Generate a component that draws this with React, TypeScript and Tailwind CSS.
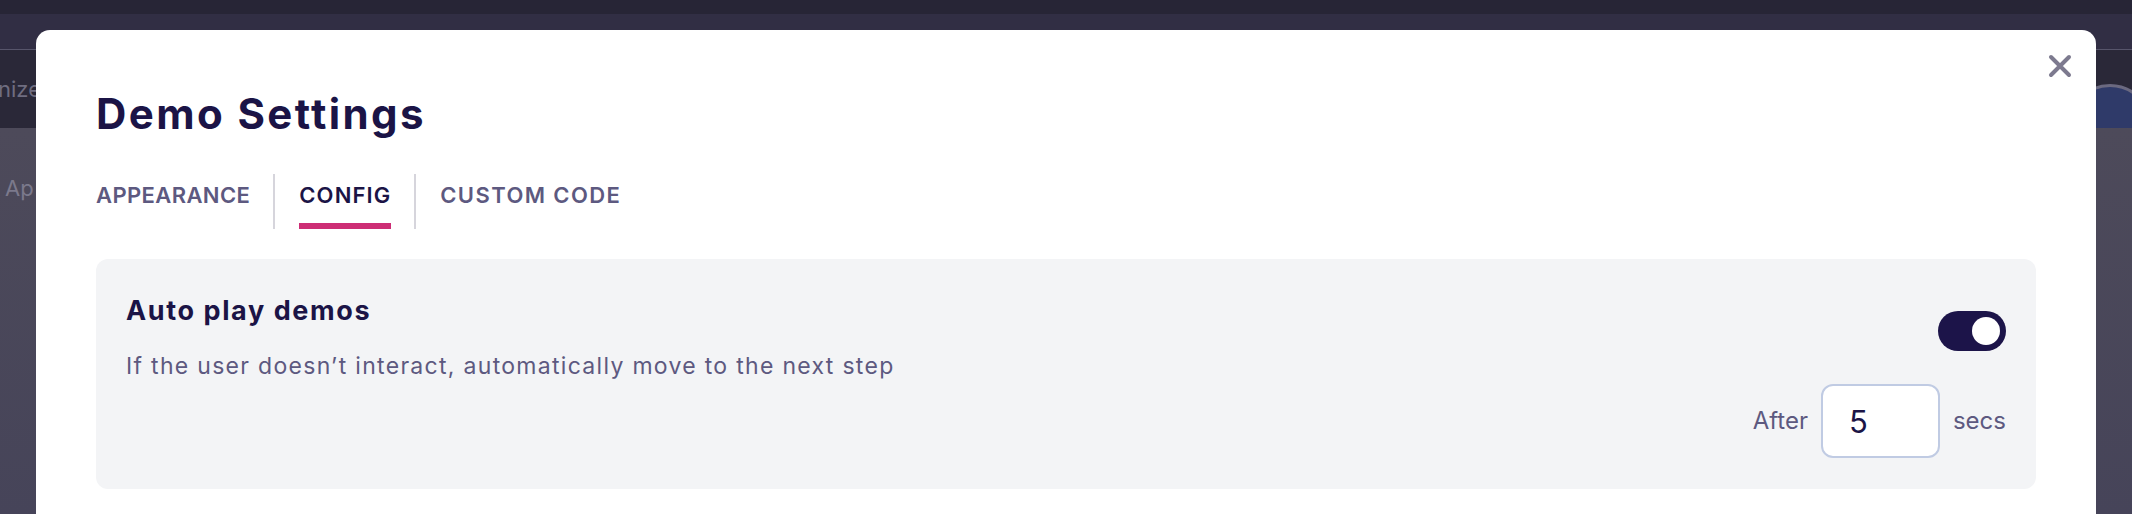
import React, { useState } from 'react'

const tabs = [
  { label: 'APPEARANCE', tracking: 'tracking-[0.4px]' },
  { label: 'CONFIG', tracking: 'tracking-[1.1px]' },
  { label: 'CUSTOM CODE', tracking: 'tracking-[1.4px]' }
]

const Backdrop: React.FC = () => (
  <div className="flex flex-col h-full">
    <div className="h-[14px] shrink-0 bg-[#272536]" />
    <div className="h-[36px] shrink-0 bg-[#312e44] border-b border-[#57556b]" />
    <div className="h-[78px] shrink-0 flex items-center justify-between bg-[#2a2838]">
      <span className="-ml-[2px] text-[22px] text-[#6f6d80]">nize</span>
      <div className="w-[84px] h-[84px] mt-[74px] -mr-[20px] rounded-full border-[3px] border-[#6b6980] bg-[#2f3a69]" />
    </div>
    <div className="flex-1 bg-gradient-to-b from-[#4d4a5a] to-[#464459] pt-[44px]">
      <span className="ml-[5px] text-[22px] text-[#7b798c]">Ap</span>
    </div>
  </div>
)

const Toggle: React.FC<{ on: boolean; onChange: (v: boolean) => void }> = ({ on, onChange }) => (
  <button
    type="button"
    onClick={() => onChange(!on)}
    className="flex items-center w-[68px] h-[40px] rounded-full bg-[#1c1449] px-[6px] justify-end"
  >
    <span className="w-[28px] h-[28px] rounded-full bg-white" />
  </button>
)

export default function App() {
  const [active, setActive] = useState('CONFIG')
  const [autoPlay, setAutoPlay] = useState(true)
  const [secs, setSecs] = useState('5')

  return (
    <div className="relative w-[2132px] h-[514px] overflow-hidden bg-[#312e44] font-['Inter',sans-serif]">
      <Backdrop />

      <div className="absolute left-[36px] top-[30px] w-[2060px] h-[540px] rounded-[14px] bg-white px-[60px] pt-[60px]">
        <button type="button" className="absolute top-[24px] right-[24px] w-[24px] h-[24px]">
          <svg viewBox="0 0 24 24" className="w-[24px] h-[24px]" fill="none" stroke="#7d7a8f" strokeWidth="4" strokeLinecap="round">
            <path d="M3 3l18 18M21 3L3 21" />
          </svg>
        </button>

        <h1 className="text-[42px] leading-[48px] font-bold tracking-[2.4px] text-[#1b1446]">
          Demo Settings
        </h1>

        <div className="flex h-[55px] mt-[36px]">
          {tabs.map((t, i) => (
            <div key={t.label} className={i > 0 ? 'flex border-l-2 border-[#d6d5dc] pl-[24px] pr-[23px]' : 'flex pr-[23px]'}>
              <button
                type="button"
                onClick={() => setActive(t.label)}
                className="flex flex-col justify-between h-full pt-[6px]"
              >
                <span
                  className={
                    'text-[22px] leading-[30px] font-semibold ' +
                    t.tracking +
                    (active === t.label ? ' text-[#1b1446]' : ' text-[#5d5980]')
                  }
                >
                  {t.label}
                </span>
                <span className={active === t.label ? 'h-[6px] w-full bg-[#cd2d75]' : 'h-[6px] w-full'} />
              </button>
            </div>
          ))}
        </div>

        <div className="mt-[30px] h-[230px] rounded-[12px] bg-[#f3f4f6] px-[30px] pt-[30px] flex justify-between">
          <div className="pt-[4px]">
            <div className="text-[27px] leading-[36px] font-bold tracking-[1.6px] text-[#1b1446]">
              Auto play demos
            </div>
            <div className="mt-[22px] text-[23px] leading-[30px] tracking-[1.3px] text-[#5d5980]">
              If the user doesn’t interact, automatically move to the next step
            </div>
          </div>

          <div className="flex flex-col items-end pt-[22px]">
            <Toggle on={autoPlay} onChange={setAutoPlay} />
            <div className="flex items-center gap-[13px] mt-[33px]">
              <span className="text-[24px] text-[#5d5980]">After</span>
              <input
                value={secs}
                onChange={(e) => setSecs(e.target.value.replace(/[^0-9]/g, ''))}
                className="w-[119px] h-[74px] rounded-[12px] border-2 border-[#c0cbe3] bg-white pl-[26px] text-[31px] text-[#1b1446] outline-none"
              />
              <span className="text-[24px] text-[#5d5980]">secs</span>
            </div>
          </div>
        </div>
      </div>
    </div>
  )
}
